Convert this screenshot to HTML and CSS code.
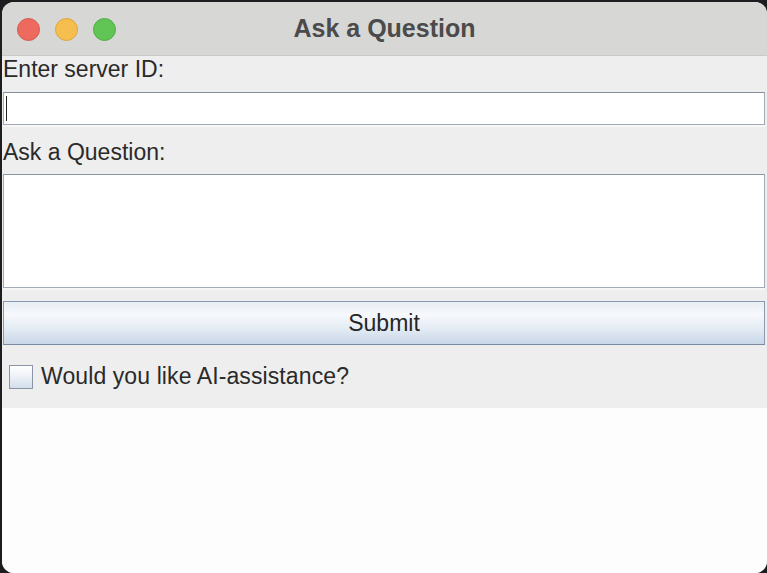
FILE: index.html
```html
<!DOCTYPE html>
<html lang="en">
<head>
<meta charset="utf-8">
<title>Ask a Question</title>
<link rel="stylesheet" href="styles.css">
</head>
<body>
<div class="window">
  <div class="titlebar">
    <div class="lights">
      <span class="light red"></span>
      <span class="light yellow"></span>
      <span class="light green"></span>
    </div>
    <div class="title">Ask a Question</div>
    <div class="spacer"></div>
  </div>
  <div class="form">
    <div class="label first">Enter server ID:</div>
    <div class="field"><span class="caret"></span></div>
    <div class="label second">Ask a Question:</div>
    <div class="textarea"></div>
    <div class="button">Submit</div>
    <div class="check-row">
      <span class="checkbox"></span>
      <span class="check-label">Would you like AI-assistance?</span>
    </div>
  </div>
  <div class="empty"></div>
</div>
</body>
</html>
```
FILE: styles.css
```css
html, body {
  margin: 0;
  padding: 0;
  background: #1d1c1f;
  width: 767px;
  height: 573px;
  overflow: hidden;
}

.window {
  margin: 2px 0 0 2px;
  width: 765px;
  height: 571px;
  border-radius: 12px;
  overflow: hidden;
  background: #fdfdfd;
  display: flex;
  flex-direction: column;
  font-family: "Liberation Sans", Arial, sans-serif;
  color: #2a2a2a;
}

.titlebar {
  height: 53px;
  flex: none;
  background: #d7d7d6;
  border-bottom: 1px solid #c9c9c9;
  display: grid;
  grid-template-columns: 1fr auto 1fr;
  align-items: center;
}

.lights {
  display: flex;
  gap: 15px;
  padding-left: 15px;
  margin-top: 1px;
}

.light {
  width: 23px;
  height: 23px;
  border-radius: 50%;
  box-sizing: border-box;
}

.red { background: #ee6a5e; border: 1px solid #d8584d; }
.yellow { background: #f5be4f; border: 1px solid #dca63d; }
.green { background: #61c555; border: 1px solid #4fae43; }

.title {
  font-weight: bold;
  font-size: 25px;
  color: #4b4b4b;
  margin-top: -1px;
}

.form {
  flex: none;
  background: #eeeeee;
  padding: 0 2px 0 1px;
  display: flex;
  flex-direction: column;
}

.label {
  font-size: 23px;
  line-height: 26px;
  height: 26px;
}

.label.second {
  margin-top: 14px;
}

.field {
  margin-top: 10px;
  height: 33px;
  box-sizing: border-box;
  background: #ffffff;
  border: 1px solid #a3abb6;
  border-top-color: #848e9b;
  display: flex;
  align-items: center;
  padding-left: 2px;
  box-shadow: 0 2px 0 #f7f7f7;
}

.caret {
  width: 1px;
  height: 25px;
  background: #222;
}

.textarea {
  margin-top: 9px;
  height: 114px;
  box-sizing: border-box;
  background: #ffffff;
  border: 1px solid #a3abb6;
  border-top-color: #8a94a1;
  box-shadow: 0 2px 0 #f7f7f7;
}

.button {
  margin-top: 13px;
  height: 44px;
  box-sizing: border-box;
  border: 1px solid #8a9ab0;
  border-bottom-color: #7a8aa0;
  background: linear-gradient(to bottom, #e9eef5 0%, #f6f8fb 30%, #e6edf5 60%, #c9d7e8 100%);
  display: flex;
  align-items: center;
  justify-content: center;
  font-size: 23px;
  color: #262626;
}

.check-row {
  height: 63px;
  display: flex;
  align-items: center;
  padding-left: 6px;
  gap: 8px;
}

.checkbox {
  width: 24px;
  height: 24px;
  box-sizing: border-box;
  border: 1px solid #8a96a8;
  background: linear-gradient(to bottom, #ffffff 0%, #eef2f7 45%, #d3deec 100%);
  margin-top: 1px;
}

.check-label {
  font-size: 23px;
  letter-spacing: 0.1px;
}

.empty {
  flex: 1;
  background: #fdfdfd;
}
```
